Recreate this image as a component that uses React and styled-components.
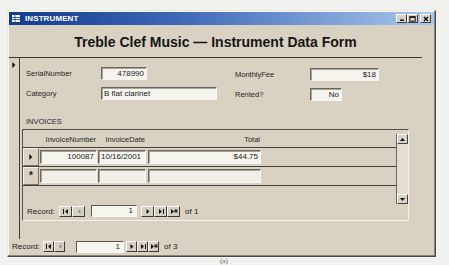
import React from 'react'
import styled, { createGlobalStyle } from 'styled-components'

const GlobalStyle = createGlobalStyle`
  html, body {
    margin: 0;
    background: #f1f1ef;
  }
  body {
    font-family: "Liberation Sans", Arial, sans-serif;
    color: #1b1b1b;
  }
`;

const Page = styled.div`
  width: 449px;
  height: 265px;
  overflow: hidden;
  box-sizing: border-box;
  padding: 10px 0 0 7px;
`;

const Window = styled.div`
  width: 429px;
  height: 247px;
  box-sizing: border-box;
  background: #d9d1c1;
  border: 1px solid;
  border-color: #ece8df #4f4b44 #4f4b44 #ece8df;
  box-shadow: inset -1px -1px 0 #8a857a, inset 1px 1px 0 #faf8f2;
  padding: 1px;
  display: flex;
  flex-direction: column;
`;

const TitleBar = styled.div`
  height: 13px;
  flex: none;
  display: flex;
  align-items: center;
  padding: 0 3px 0 3px;
  background: linear-gradient(to right, #123a8e 0%, #3d68b8 40%, #a9c8ee 100%);
  color: #fff;
  font-size: 8px;
  font-weight: bold;
  letter-spacing: 0.1px;
`;

const TitleText = styled.span`
  margin-left: 5px;
  flex: 1;
`;

const CaptionButtons = styled.div`
  display: flex;
`;

const CaptionButton = styled.div`
  width: 11px;
  height: 9px;
  box-sizing: border-box;
  margin-left: ${p => (p.$gap ? '2px' : '0')};
  background: #d6d2ca;
  border: 1px solid;
  border-color: #fff #404040 #404040 #fff;
  display: flex;
  align-items: center;
  justify-content: center;
`;

const Header = styled.div`
  height: 32px;
  flex: none;
  margin-right: 12px;
  border-bottom: 1px solid #3f3c36;
  display: flex;
  align-items: center;
  justify-content: center;
`;

const FormTitle = styled.h1`
  margin: 0;
  font-size: 14px;
  font-weight: bold;
  color: #161616;
  padding-top: 1px;
`;

const Detail = styled.div`
  height: 181px;
  flex: none;
  display: flex;
`;

const Selector = styled.div`
  width: 11px;
  border-right: 1px solid #3f3c36;
  display: flex;
  justify-content: center;
  padding-top: 4px;
  box-sizing: border-box;
`;

const Content = styled.div`
  flex: 1;
  padding: 8px 0 0 2px;
`;

const Fields = styled.div`
  display: grid;
  grid-template-columns: 75px 134px 75px auto;
  row-gap: 5px;
  align-items: center;
  margin-left: 4px;
`;

const Label = styled.div`
  font-size: 7.5px;
  line-height: 13px;
  color: #262626;
  margin-top: ${p => p.$shift || 0}px;
`;

const TextBox = styled.div`
  box-sizing: border-box;
  width: ${p => p.$w}px;
  height: 13px;
  margin-top: ${p => p.$shift || 0}px;
  background: #f6f4ef;
  border: 1px solid;
  border-color: #6b675f #f9f7f2 #f9f7f2 #6b675f;
  box-shadow: inset 1px 1px 0 #a9a49a;
  font-size: 8px;
  line-height: 11px;
  padding: 0 2px;
  text-align: ${p => p.$align || 'left'};
  white-space: nowrap;
  overflow: hidden;
`;

const Caption = styled.div`
  font-size: 7.5px;
  color: #262626;
  margin: 16px 0 2px 4px;
  line-height: 10px;
`;

const Subform = styled.div`
  width: 387px;
  height: 92px;
  box-sizing: border-box;
  border: 1px solid;
  border-color: #55514a #f4f1ea #f4f1ea #55514a;
  display: flex;
  flex-direction: column;
`;

const SheetArea = styled.div`
  height: 74px;
  display: flex;
`;

const Sheet = styled.div`
  flex: 1;
`;

const SheetHeader = styled.div`
  height: 18px;
  box-sizing: border-box;
  border-bottom: 1px solid #46423b;
  display: flex;
  align-items: flex-end;
  padding: 0 0 3px 17px;
  font-size: 7.5px;
  color: #262626;
`;

const HeadCell = styled.div`
  width: ${p => p.$w}px;
  margin-right: ${p => p.$gap}px;
  text-align: right;
  padding-right: 1px;
  box-sizing: border-box;
`;

const SheetRow = styled.div`
  height: 19px;
  box-sizing: border-box;
  border-bottom: 1px solid #46423b;
  display: flex;
  align-items: center;
`;

const RowSelector = styled.div`
  width: 16px;
  height: 18px;
  box-sizing: border-box;
  border: 1px solid;
  border-color: #f7f5ef #77726a #77726a #f7f5ef;
  margin-right: 1px;
  display: flex;
  align-items: center;
  justify-content: center;
  font-size: 10px;
  font-weight: bold;
  line-height: 1;
`;

const Cell = styled(TextBox)`
  height: 14px;
  line-height: 12px;
  margin-right: ${p => p.$gap}px;
  background: ${p => (p.$empty ? '#f1efea' : '#f6f4ef')};
`;

const ScrollBar = styled.div`
  width: 12px;
  box-sizing: border-box;
  margin-top: 4px;
  border-left: 1px solid #6c675f;
  background: repeating-conic-gradient(#ebe7de 0% 25%, #dcd5c6 0% 50%) 0 0 / 2px 2px;
  display: flex;
  flex-direction: column;
  justify-content: space-between;
`;

const ScrollButton = styled.div`
  height: 10px;
  box-sizing: border-box;
  background: #d8d2c6;
  border: 1px solid;
  border-color: #fff #444 #444 #fff;
  display: flex;
  align-items: center;
  justify-content: center;
`;

const NavBar = styled.div`
  height: ${p => p.$h}px;
  flex: none;
  display: flex;
  align-items: center;
  padding-left: ${p => p.$pad}px;
  font-size: 8px;
`;

const NavLabel = styled.span`
  width: ${p => p.$w}px;
`;

const NavButton = styled.div`
  width: ${p => p.$w}px;
  height: 11px;
  box-sizing: border-box;
  background: #d6d0c4;
  border: 1px solid;
  border-color: #fbfaf6 #3e3b36 #3e3b36 #fbfaf6;
  display: flex;
  align-items: center;
  justify-content: center;
`;

const NavInput = styled.div`
  width: ${p => p.$w}px;
  height: 12px;
  box-sizing: border-box;
  margin: 0 ${p => p.$after}px 0 ${p => p.$before}px;
  background: #f7f5f0;
  border: 1px solid;
  border-color: #5d5951 #f9f7f2 #f9f7f2 #5d5951;
  font-size: 8px;
  line-height: 10px;
  text-align: right;
  padding-right: 3px;
`;

const OfText = styled.span`
  margin-left: 5px;
`;

const Footnote = styled.div`
  margin: 0 0 0 213px;
  font-family: "Liberation Serif", serif;
  font-size: 7px;
  line-height: 8px;
  color: #555;
`;

function Glyph({ kind, disabled }) {
  const c = disabled ? '#9a958c' : '#111'
  return (
    <svg width="8" height="7" viewBox="0 0 8 7">
      {kind === 'first' && (<><rect x="1" y="1" width="1" height="5" fill={c} /><path d="M6 1 L6 6 L3 3.5 Z" fill={c} /></>)}
      {kind === 'prev' && <path d="M5.5 1 L5.5 6 L2.5 3.5 Z" fill={c} />}
      {kind === 'next' && <path d="M2.5 1 L2.5 6 L5.5 3.5 Z" fill={c} />}
      {kind === 'last' && (<><path d="M2 1 L2 6 L5 3.5 Z" fill={c} /><rect x="6" y="1" width="1" height="5" fill={c} /></>)}
      {kind === 'new' && (<><path d="M1 1 L1 6 L4 3.5 Z" fill={c} /><path d="M6 1 V5 M4.3 2 L7.7 4 M7.7 2 L4.3 4" stroke={c} strokeWidth="0.9" /></>)}
    </svg>
  )
}

function Navigator({ of, pad, h, labelW, btnW, inputW, before, after }) {
  return (
    <NavBar $pad={pad} $h={h}>
      <NavLabel $w={labelW}>Record:</NavLabel>
      <NavButton $w={btnW}><Glyph kind="first" /></NavButton>
      <NavButton $w={btnW}><Glyph kind="prev" disabled /></NavButton>
      <NavInput $w={inputW} $before={before} $after={after}>1</NavInput>
      <NavButton $w={btnW}><Glyph kind="next" /></NavButton>
      <NavButton $w={btnW}><Glyph kind="last" /></NavButton>
      <NavButton $w={btnW}><Glyph kind="new" /></NavButton>
      <OfText>of {of}</OfText>
    </NavBar>
  )
}

function Triangle({ size = 6 }) {
  return (
    <svg width={size * 0.6} height={size} viewBox="0 0 3 6">
      <path d="M0 0 L3 3 L0 6 Z" fill="#111" />
    </svg>
  )
}

export default function App() {
  return (
    <Page>
      <GlobalStyle />
      <Window>
        <TitleBar>
          <svg width="8" height="7" viewBox="0 0 8 7">
            <rect x="0.5" y="0.5" width="7" height="6" fill="#fff" stroke="#fff" />
            <path d="M0 2.5 H8 M0 4.5 H8 M3 0 V7" stroke="#123a8e" strokeWidth="0.8" />
          </svg>
          <TitleText>INSTRUMENT</TitleText>
          <CaptionButtons>
            <CaptionButton>
              <svg width="6" height="5" viewBox="0 0 6 5"><rect x="1" y="3.5" width="4" height="1.3" fill="#000" /></svg>
            </CaptionButton>
            <CaptionButton>
              <svg width="7" height="6" viewBox="0 0 7 6"><rect x="0.8" y="0.8" width="5.4" height="4.4" fill="none" stroke="#000" strokeWidth="0.9" /><rect x="0.8" y="0.5" width="5.4" height="1.2" fill="#000" /></svg>
            </CaptionButton>
            <CaptionButton $gap>
              <svg width="6" height="6" viewBox="0 0 6 6"><path d="M1 1 L5 5 M5 1 L1 5" stroke="#000" strokeWidth="1.2" /></svg>
            </CaptionButton>
          </CaptionButtons>
        </TitleBar>

        <Header>
          <FormTitle>Treble Clef Music — Instrument Data Form</FormTitle>
        </Header>

        <Detail>
          <Selector><Triangle size={6} /></Selector>
          <Content>
            <Fields>
              <Label>SerialNumber</Label>
              <TextBox $w={46} $align="right">478990</TextBox>
              <Label $shift={2}>MonthlyFee</Label>
              <TextBox $w={69} $align="right" $shift={2}>$18</TextBox>
              <Label>Category</Label>
              <TextBox $w={116}>B flat clarinet</TextBox>
              <Label $shift={2}>Rented?</Label>
              <TextBox $w={32} $align="right" $shift={2}>No</TextBox>
            </Fields>

            <Caption>INVOICES</Caption>
            <Subform>
              <SheetArea>
                <Sheet>
                  <SheetHeader>
                    <HeadCell $w={57} $gap={1}>InvoiceNumber</HeadCell>
                    <HeadCell $w={48} $gap={2}>InvoiceDate</HeadCell>
                    <HeadCell $w={113} $gap={0}>Total</HeadCell>
                  </SheetHeader>
                  <SheetRow>
                    <RowSelector><Triangle size={6} /></RowSelector>
                    <Cell $w={57} $gap={1} $align="right">100087</Cell>
                    <Cell $w={48} $gap={2}>10/16/2001</Cell>
                    <Cell $w={113} $gap={0} $align="right">$44.75</Cell>
                  </SheetRow>
                  <SheetRow>
                    <RowSelector>*</RowSelector>
                    <Cell $w={57} $gap={1} $empty />
                    <Cell $w={48} $gap={2} $empty />
                    <Cell $w={113} $gap={0} $empty />
                  </SheetRow>
                </Sheet>
                <ScrollBar>
                  <ScrollButton>
                    <svg width="5" height="3" viewBox="0 0 5 3"><path d="M0 3 L2.5 0 L5 3 Z" fill="#111" /></svg>
                  </ScrollButton>
                  <ScrollButton>
                    <svg width="5" height="3" viewBox="0 0 5 3"><path d="M0 0 L2.5 3 L5 0 Z" fill="#111" /></svg>
                  </ScrollButton>
                </ScrollBar>
              </SheetArea>
              <Navigator of={1} pad={4} h={14} labelW={32} btnW={13} inputW={46} before={6} after={4} />
            </Subform>
          </Content>
        </Detail>

        <Navigator of={3} pad={3} h={15} labelW={31} btnW={11} inputW={48} before={11} after={2} />
      </Window>
      <Footnote>(a)</Footnote>
    </Page>
  )
}
